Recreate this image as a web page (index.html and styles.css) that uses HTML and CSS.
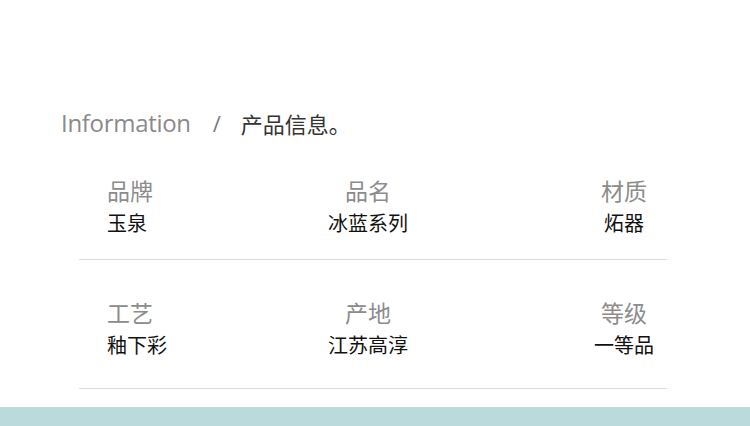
FILE: index.html
```html
<!DOCTYPE html>
<html lang="zh-CN">
<head>
  <meta charset="UTF-8">
  <meta name="viewport" content="width=device-width, initial-scale=1.0">
  <title>产品信息</title>
  <link rel="stylesheet" href="styles.css">
</head>
<body>
  <section class="info">
    <h2 class="info-title">
      <span class="title-en">Information</span>
      <span class="title-sep">/</span>
      <span class="title-cn">产品信息。</span>
    </h2>

    <div class="info-list">
      <div class="info-row">
        <div class="info-cell cell-left">
          <p class="cell-label">品牌</p>
          <p class="cell-value">玉泉</p>
        </div>
        <div class="info-cell cell-mid">
          <p class="cell-label">品名</p>
          <p class="cell-value">冰蓝系列</p>
        </div>
        <div class="info-cell cell-right">
          <p class="cell-label">材质</p>
          <p class="cell-value">炻器</p>
        </div>
      </div>

      <div class="info-row">
        <div class="info-cell cell-left">
          <p class="cell-label">工艺</p>
          <p class="cell-value">釉下彩</p>
        </div>
        <div class="info-cell cell-mid">
          <p class="cell-label">产地</p>
          <p class="cell-value">江苏高淳</p>
        </div>
        <div class="info-cell cell-right">
          <p class="cell-label">等级</p>
          <p class="cell-value">一等品</p>
        </div>
      </div>
    </div>
  </section>

  <div class="footer-band"></div>
</body>
</html>
```

FILE: styles.css
```css
/* Reset */
body, h2, p {
  margin: 0;
  padding: 0;
}

body {
  font-family: "Open Sans", "Noto Sans CJK SC", sans-serif;
  background-color: #ffffff;
  color: #111111;
}

/* Info section */
.info {
  padding-top: 109px;
}

.info-title {
  display: flex;
  align-items: center;
  height: 28px;
  padding-left: 61px;
  font-weight: normal;
  line-height: 28px;
}

.title-en {
  font-size: 24px;
  color: #8a8a8a;
  letter-spacing: -0.3px;
}

.title-sep {
  margin: 0 20px 0 22px;
  font-size: 22px;
  color: #7a7a7a;
}

.title-cn {
  font-family: "Noto Sans CJK SC", sans-serif;
  font-size: 22px;
  color: #333333;
}

.info-list {
  width: 588px;
  margin-left: 79px;
}

.info-row {
  display: grid;
  grid-template-columns: 161px 200px 1fr;
  padding: 37px 0 25px 28px;
  border-bottom: 1px solid #dcdcdc;
}

.info-row:first-child {
  padding-top: 38px;
  padding-bottom: 18px;
}

.info-cell {
  font-family: "Noto Sans CJK SC", sans-serif;
}

.cell-mid {
  text-align: center;
}

.cell-right {
  justify-self: end;
  width: 86px;
  text-align: center;
}

.cell-label {
  font-size: 23px;
  line-height: 30px;
  color: #8c8c8c;
}

.cell-value {
  font-size: 20px;
  line-height: 36px;
  color: #111111;
}

/* Bottom band */
.footer-band {
  height: 40px;
  margin-top: 18px;
  background-color: #badadb;
}
```
